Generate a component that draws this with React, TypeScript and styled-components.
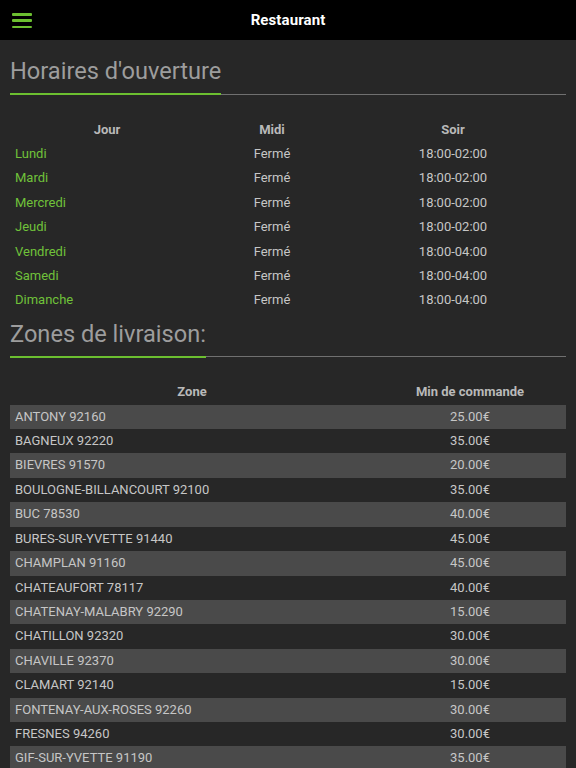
import { createGlobalStyle } from "styled-components";
import styled from "styled-components";

const GlobalStyle = createGlobalStyle`
  body {
    margin: 0;
    background: #272727;
    font-family: Roboto, "Liberation Sans", sans-serif;
  }
`;

const Hours = [
  { day: "Lundi", midi: "Fermé", soir: "18:00-02:00" },
  { day: "Mardi", midi: "Fermé", soir: "18:00-02:00" },
  { day: "Mercredi", midi: "Fermé", soir: "18:00-02:00" },
  { day: "Jeudi", midi: "Fermé", soir: "18:00-02:00" },
  { day: "Vendredi", midi: "Fermé", soir: "18:00-04:00" },
  { day: "Samedi", midi: "Fermé", soir: "18:00-04:00" },
  { day: "Dimanche", midi: "Fermé", soir: "18:00-04:00" },
];

const Zones = [
  { zone: "ANTONY 92160", min: "25.00€" },
  { zone: "BAGNEUX 92220", min: "35.00€" },
  { zone: "BIEVRES 91570", min: "20.00€" },
  { zone: "BOULOGNE-BILLANCOURT 92100", min: "35.00€" },
  { zone: "BUC 78530", min: "40.00€" },
  { zone: "BURES-SUR-YVETTE 91440", min: "45.00€" },
  { zone: "CHAMPLAN 91160", min: "45.00€" },
  { zone: "CHATEAUFORT 78117", min: "40.00€" },
  { zone: "CHATENAY-MALABRY 92290", min: "15.00€" },
  { zone: "CHATILLON 92320", min: "30.00€" },
  { zone: "CHAVILLE 92370", min: "30.00€" },
  { zone: "CLAMART 92140", min: "15.00€" },
  { zone: "FONTENAY-AUX-ROSES 92260", min: "30.00€" },
  { zone: "FRESNES 94260", min: "30.00€" },
  { zone: "GIF-SUR-YVETTE 91190", min: "35.00€" },
];

const App = () => {
  return (
    <>
      <GlobalStyle />
      <TopBar>
        <MenuButton aria-label="menu">
          <span />
          <span />
          <span />
        </MenuButton>
        <Title>Restaurant</Title>
      </TopBar>
      <Content>
        <SectionTitle>
          <span>Horaires d'ouverture</span>
        </SectionTitle>
        <HoursTable>
          <colgroup>
            <col style={{ width: 194 }} />
            <col style={{ width: 136 }} />
            <col />
          </colgroup>
          <thead>
            <tr>
              <Th>Jour</Th>
              <Th>Midi</Th>
              <Th>Soir</Th>
            </tr>
          </thead>
          <tbody>
            {Hours.map((row) => (
              <tr key={row.day}>
                <DayCell>{row.day}</DayCell>
                <Td align="center">{row.midi}</Td>
                <Td align="center">{row.soir}</Td>
              </tr>
            ))}
          </tbody>
        </HoursTable>

        <SectionTitle $second>
          <span>Zones de livraison:</span>
        </SectionTitle>
        <ZoneTable>
          <colgroup>
            <col style={{ width: 364 }} />
            <col />
          </colgroup>
          <thead>
            <tr>
              <Th>Zone</Th>
              <Th>Min de commande</Th>
            </tr>
          </thead>
          <tbody>
            {Zones.map((row, index) => (
              <ZoneRow key={row.zone} $striped={index % 2 === 0}>
                <Td>{row.zone}</Td>
                <Td align="center">{row.min}</Td>
              </ZoneRow>
            ))}
          </tbody>
        </ZoneTable>
      </Content>
    </>
  );
};

export default App;

const TopBar = styled.header`
  position: relative;
  height: 40px;
  background: #000;
  display: flex;
  align-items: center;
  justify-content: center;
`;

const MenuButton = styled.button`
  position: absolute;
  left: 12px;
  top: 13px;
  width: 20px;
  height: 15px;
  padding: 0;
  border: none;
  background: transparent;
  display: flex;
  flex-direction: column;
  justify-content: space-between;

  span {
    display: block;
    height: 2.5px;
    background: #6cbf30;
    border-radius: 1px;
  }
`;

const Title = styled.h1`
  margin: 0;
  color: #fff;
  font-size: 15px;
  font-weight: 700;
  letter-spacing: 0.1px;
`;

const Content = styled.main`
  padding: 0 10px 20px;
`;

const SectionTitle = styled.h2<{ $second?: boolean }>`
  margin: ${(props) => (props.$second ? "7px" : "17px")} 0 0;
  font-size: 23.6px;
  line-height: 28px;
  font-weight: 400;
  color: #9d9d9d;
  border-bottom: 1.5px solid #707070;

  span {
    display: inline-block;
    padding-bottom: 8px;
    border-bottom: 2px solid #6cbf30;
    margin-bottom: -1.5px;
  }
`;

const BaseTable = styled.table`
  width: 100%;
  border-collapse: collapse;
  table-layout: fixed;
  font-size: 13px;
`;

const HoursTable = styled(BaseTable)`
  margin-top: 23px;
`;

const ZoneTable = styled(BaseTable)`
  margin-top: 23px;
`;

const Th = styled.th`
  padding: 5px;
  line-height: 14.4px;
  font-weight: 700;
  color: #b9b9b9;
  text-align: center;
`;

const Td = styled.td<{ align?: string }>`
  padding: 5px;
  line-height: 14.4px;
  color: #c6c6c6;
  text-align: ${(props) => props.align || "left"};
  white-space: nowrap;
`;

const DayCell = styled(Td)`
  color: #70c23a;
`;

const ZoneRow = styled.tr<{ $striped: boolean }>`
  background: ${(props) => (props.$striped ? "#4a4a4a" : "transparent")};
`;
